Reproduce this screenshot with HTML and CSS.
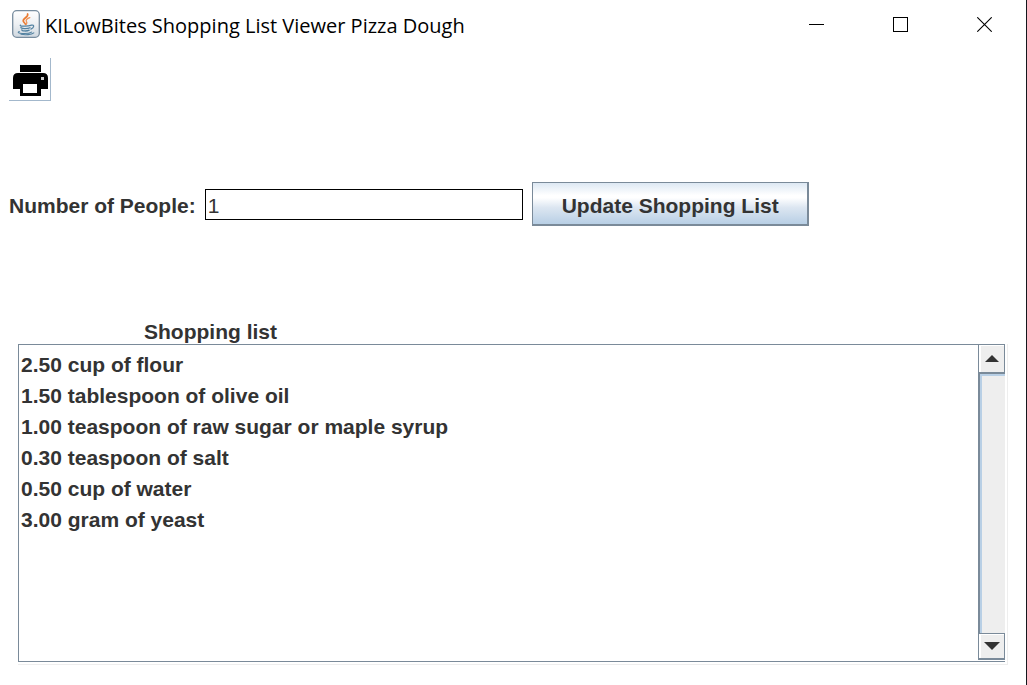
FILE: index.html
```html
<!DOCTYPE html>
<html lang="en">
<head>
<meta charset="utf-8">
<title>KILowBites Shopping List Viewer Pizza Dough</title>
<link rel="stylesheet" href="styles.css">
</head>
<body>
<div class="window">
  <header class="titlebar">
    <svg class="app-icon" width="28" height="28" viewBox="0 0 28 28" aria-hidden="true">
      <defs>
        <linearGradient id="tile" x1="0" y1="0" x2="0" y2="1">
          <stop offset="0" stop-color="#ffffff"/>
          <stop offset="0.5" stop-color="#edf0f3"/>
          <stop offset="1" stop-color="#cfd8e0"/>
        </linearGradient>
      </defs>
      <rect x="0.7" y="0.7" width="26.6" height="26.6" rx="4" fill="url(#tile)" stroke="#788d9f" stroke-width="1.3"/>
      <g fill="none" stroke-linecap="round">
        <path d="M15.6 4c1.4 3-5.3 4.300-4.300 7.200.4 1.200 2 2 2.300 3.300" stroke="#ea7b32" stroke-width="1.700"/>
        <path d="M17.800 7.600c-2.400.900-4.400 2-3.400 3.700.700 1.100.900 1.900-.2 2.900" stroke="#ee9256" stroke-width="1.300"/>
        <path d="M8.500 15.200c-2 1 7 1.500 10.300.2M9 17.300c-.8 1.500 6.600 1.700 9 .4M9.900 19.700c-.8 1.500 5 1.700 7.300.5" stroke="#5382a1" stroke-width="1.300"/>
        <path d="M19.400 15.200c3.400-.7 2.800 2.700-.5 3.900" stroke="#5382a1" stroke-width="1.200"/>
        <path d="M7.300 21.500c-4.800 2 8.200 3 12.300.6M9 24.300c4 .8 10.500.5 12.800-1.400" stroke="#5382a1" stroke-width="1.100"/>
      </g>
    </svg>
    <h1 class="title">KILowBites Shopping List Viewer Pizza Dough</h1>
    <div class="controls">
      <button class="control" type="button" aria-label="Minimize">
        <svg width="15" height="15" viewBox="0 0 15 15"><path d="M0 7.500h15" stroke="#000"/></svg>
      </button>
      <button class="control" type="button" aria-label="Maximize">
        <svg width="15" height="15" viewBox="0 0 15 15"><rect x="0.5" y="0.5" width="14" height="14" fill="none" stroke="#000"/></svg>
      </button>
      <button class="control" type="button" aria-label="Close">
        <svg width="15" height="15" viewBox="0 0 15 15"><path d="M0.300 0.300l14.400 14.400M14.700 0.300L0.300 14.700" stroke="#000" stroke-width="1.100"/></svg>
      </button>
    </div>
  </header>

  <div class="toolbar">
    <button class="print" type="button" aria-label="Print">
      <svg width="35" height="31" viewBox="0 0 35 31">
        <path d="M7 0h21v7H7z"/>
        <path fill-rule="evenodd" d="M5 8h25q5 0 5 5v11h-7v7H7v-7H0V13q0-5 5-5zM10 19v9h14v-9z"/>
        <path d="M28 12h3v3h-3z" fill="#ccc"/>
      </svg>
    </button>
  </div>

  <form class="people">
    <label class="people-label" for="people">Number of People:</label>
    <input id="people" class="people-input" type="text" value="1">
    <button class="update" type="button">Update Shopping List</button>
  </form>

  <main class="shopping">
    <h2 class="shopping-title">Shopping list</h2>
    <div class="pane">
      <div class="pane-inner">
        <ul class="items">
          <li>2.50 cup of flour</li>
          <li>1.50 tablespoon of olive oil</li>
          <li>1.00 teaspoon of raw sugar or maple syrup</li>
          <li>0.30 teaspoon of salt</li>
          <li>0.50 cup of water</li>
          <li>3.00 gram of yeast</li>
        </ul>
        <div class="scrollbar">
          <button class="arrow arrow-up" type="button" aria-label="Scroll up">
            <svg width="14" height="7" viewBox="0 0 14 7"><path d="M7 0l7 7H0z" fill="#333"/></svg>
          </button>
          <div class="track"></div>
          <button class="arrow arrow-down" type="button" aria-label="Scroll down">
            <svg width="16" height="8" viewBox="0 0 16 8"><path d="M0 0h16L8 8z" fill="#333"/></svg>
          </button>
        </div>
      </div>
    </div>
  </main>
</div>
</body>
</html>
```
FILE: styles.css
```css
* {
  box-sizing: border-box;
}

body {
  margin: 0;
  background: #fff;
  color: #333;
  font: bold 21px/24px "Liberation Sans", Arial, sans-serif;
}

button,
input {
  margin: 0;
  font: inherit;
  color: inherit;
}

svg {
  display: block;
}

.window {
  display: flex;
  flex-direction: column;
  min-height: 100vh;
  border-right: 1px solid #14161c;
}

.titlebar {
  display: flex;
  align-items: center;
  height: 50px;
  padding-left: 12px;
}

.app-icon {
  flex: none;
  margin-bottom: 2px;
}

.title {
  flex: 1;
  margin: 0 0 0 5px;
  padding-top: 2px;
  color: #000;
  font: 20px/28px "Open Sans", "Noto Sans", sans-serif;
}

.controls {
  display: flex;
}

.control {
  display: grid;
  place-items: center;
  width: 84px;
  height: 50px;
  padding: 0 0 2px;
  border: 0;
  background: none;
}

.toolbar {
  padding: 8px 9px 0;
}

.print {
  display: grid;
  place-items: center;
  width: 42px;
  height: 43px;
  padding: 2px 0 0 1px;
  border: 0 solid #a3b8cc;
  border-width: 0 1px 1px 0;
  background: #fff;
}

.people {
  display: flex;
  align-items: center;
  gap: 9px;
  margin-top: 81px;
  padding: 0 9px;
}

.people-label {
  padding-top: 4px;
}

.people-input {
  width: 318px;
  height: 31px;
  padding: 4px 2px 0;
  border: 1px solid #000;
  background: #fff;
  font-weight: normal;
}

.update {
  height: 44px;
  padding: 4px 28px 0 29px;
  border: 1px solid #7a8a99;
  border-width: 1px 2px 2px 1px;
  background: linear-gradient(#dde8f3 0%, #fff 30%, #fff 36%, #dce6f1 60%, #b8cfe5 100%);
}

.shopping {
  display: flex;
  flex: 1;
  flex-direction: column;
  margin-top: 94px;
  padding: 0 18px 20px;
}

.shopping-title {
  margin: 0 0 0 126px;
  font: inherit;
}

.pane {
  display: flex;
  flex: 1;
  border: 1px solid #eee;
  border-width: 0 1px 1px 0;
  padding: 0 2px 2px 0;
}

.pane-inner {
  display: flex;
  flex: 1;
  border: 1px solid #7a8a99;
  border-right: 0;
}

.items {
  flex: 1;
  margin: 0;
  padding: 4px 2px;
  line-height: 31px;
  list-style: none;
}

.scrollbar {
  display: flex;
  flex-direction: column;
  width: 27px;
  padding-bottom: 1px;
}

.arrow {
  display: grid;
  place-items: center;
  height: 29px;
  padding: 0;
  border: 1px solid #7a8a99;
  border-width: 0 1px 2px 1px;
  background: #eee;
  box-shadow: inset 2px 1px #fff;
}

.arrow-down {
  height: 27px;
  border-width: 1px 1px 2px;
}

.track {
  flex: 1;
  border-left: 2px solid #7a8a99;
  background: #eee;
  box-shadow: inset 2px 2px #b8cfe5;
}
```
